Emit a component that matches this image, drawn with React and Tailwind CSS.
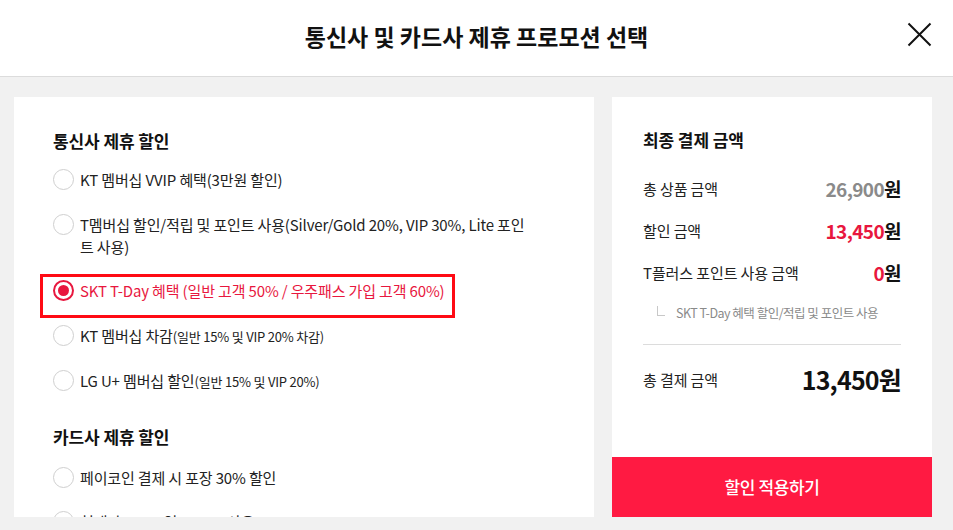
import React from 'react';

const font = { fontFamily: '"Noto Sans CJK KR", "Noto Sans", sans-serif' };

const Radio = ({ checked }) =>
    checked ? (
        <span className="flex h-[21px] w-[21px] shrink-0 items-center justify-center rounded-full border-2 border-[#e8173e] bg-white">
            <span className="h-[11px] w-[11px] rounded-full bg-[#e8173e]" />
        </span>
    ) : (
        <span className="h-[21px] w-[21px] shrink-0 rounded-full border border-[#cfcfcf] bg-white" />
    );

const Option = ({ checked, children }) => (
    <div className="flex items-start gap-[6px]">
        <Radio checked={checked} />
        <div className={`text-[15px] leading-[22px] tracking-[-0.15px] ${checked ? 'text-[#e8173e]' : 'text-[#222]'}`}>
            {children}
        </div>
    </div>
);

const Small = ({ children }) => <span className="text-[13px] tracking-[-0.2px]">{children}</span>;

const Row = ({ label, value, color }) => (
    <div className="flex h-[28px] items-center justify-between">
        <span className="text-[15px] tracking-[-0.1px] text-[#222]">{label}</span>
        <span className="text-[19px] font-bold tracking-[-0.6px]">
            <span className={color}>{value}</span>
            <span className="text-[#111]">원</span>
        </span>
    </div>
);

export default function App() {
    return (
        <div className="h-[530px] w-[953px] overflow-hidden bg-[#f1f1f1]" style={font}>
            {/* header */}
            <div className="relative flex h-[77px] items-center justify-center border-b border-[#dcdcdc] bg-white pb-[4px]">
                <h1 className="text-[23px] font-bold tracking-[0px] text-[#111]">통신사 및 카드사 제휴 프로모션 선택</h1>
                <button className="absolute right-[21px] top-[22px] h-[25px] w-[25px]">
                    <svg viewBox="0 0 25 25" className="h-[25px] w-[25px]">
                        <path d="M1.5 1.5 L23.5 23.5 M23.5 1.5 L1.5 23.5" stroke="#111" strokeWidth="2" fill="none" />
                    </svg>
                </button>
            </div>

            <div className="flex gap-[18px] px-[14px] pt-[20px]">
                {/* left: promotions */}
                <div className="h-[420px] w-[580px] overflow-hidden bg-white pl-[39px] pt-[32px]">
                    <h2 className="mb-[16px] text-[17px] font-bold leading-[24px] tracking-[-0.1px] text-[#111]">통신사 제휴 할인</h2>
                    <div className="flex flex-col gap-[22.5px]">
                        <Option>KT 멤버십 VVIP 혜택(3만원 할인)</Option>
                        <Option>
                            T멤버십 할인/적립 및 포인트 사용(Silver/Gold 20%, VIP 30%, Lite 포인
                            <br />
                            트 사용)
                        </Option>
                        <div className="relative">
                            <Option checked>SKT T-Day 혜택 (일반 고객 50% / 우주패스 가입 고객 60%)</Option>
                            <div className="pointer-events-none absolute -left-[13px] -top-[6px] h-[44px] w-[415px] border-[3px] border-[#ff0a14]" />
                        </div>
                        <Option>
                            KT 멤버십 차감<Small>(일반 15% 및 VIP 20% 차감)</Small>
                        </Option>
                        <Option>
                            LG U+ 멤버십 할인<Small>(일반 15% 및 VIP 20%)</Small>
                        </Option>
                    </div>

                    <h2 className="mb-[18px] mt-[32px] text-[17px] font-bold leading-[24px] tracking-[-0.1px] text-[#111]">카드사 제휴 할인</h2>
                    <div className="flex flex-col gap-[22px]">
                        <Option>페이코인 결제 시 포장 30% 할인</Option>
                        <Option>현대카드 M포인트 50% 사용</Option>
                    </div>
                </div>

                {/* right: summary */}
                <div className="flex h-[420px] w-[320px] flex-col bg-white">
                    <div className="flex-1 px-[31px] pt-[31px]">
                        <h2 className="mb-[23px] text-[17px] font-bold leading-[24px] tracking-[-0.1px] text-[#111]">최종 결제 금액</h2>
                        <div className="flex flex-col gap-[14px]">
                            <Row label="총 상품 금액" value="26,900" color="text-[#8a8a8a]" />
                            <Row label="할인 금액" value="13,450" color="text-[#e8173e]" />
                            <Row label="T플러스 포인트 사용 금액" value="0" color="text-[#e8173e]" />
                        </div>
                        <div className="mt-[17px] flex items-center gap-[11px] pl-[14px] leading-[18px]">
                            <span className="mb-[4px] h-[10px] w-[8px] border-b border-l border-[#c8c8c8]" />
                            <span className="text-[12.5px] tracking-[-0.5px] text-[#8a8a8a]">SKT T-Day 혜택 할인/적립 및 포인트 사용</span>
                        </div>
                        <div className="mt-[22px] border-t border-[#dcdcdc] pt-[17px]">
                            <div className="flex h-[36px] items-center justify-between">
                                <span className="text-[15px] tracking-[-0.1px] text-[#222]">총 결제 금액</span>
                                <span className="text-[25px] font-bold tracking-[-0.8px] text-[#111]">13,450원</span>
                            </div>
                        </div>
                    </div>
                    <button className="h-[60px] w-full bg-[#ff1a42] text-[17px] font-medium tracking-[-0.4px] text-white">할인 적용하기</button>
                </div>
            </div>
        </div>
    );
}
